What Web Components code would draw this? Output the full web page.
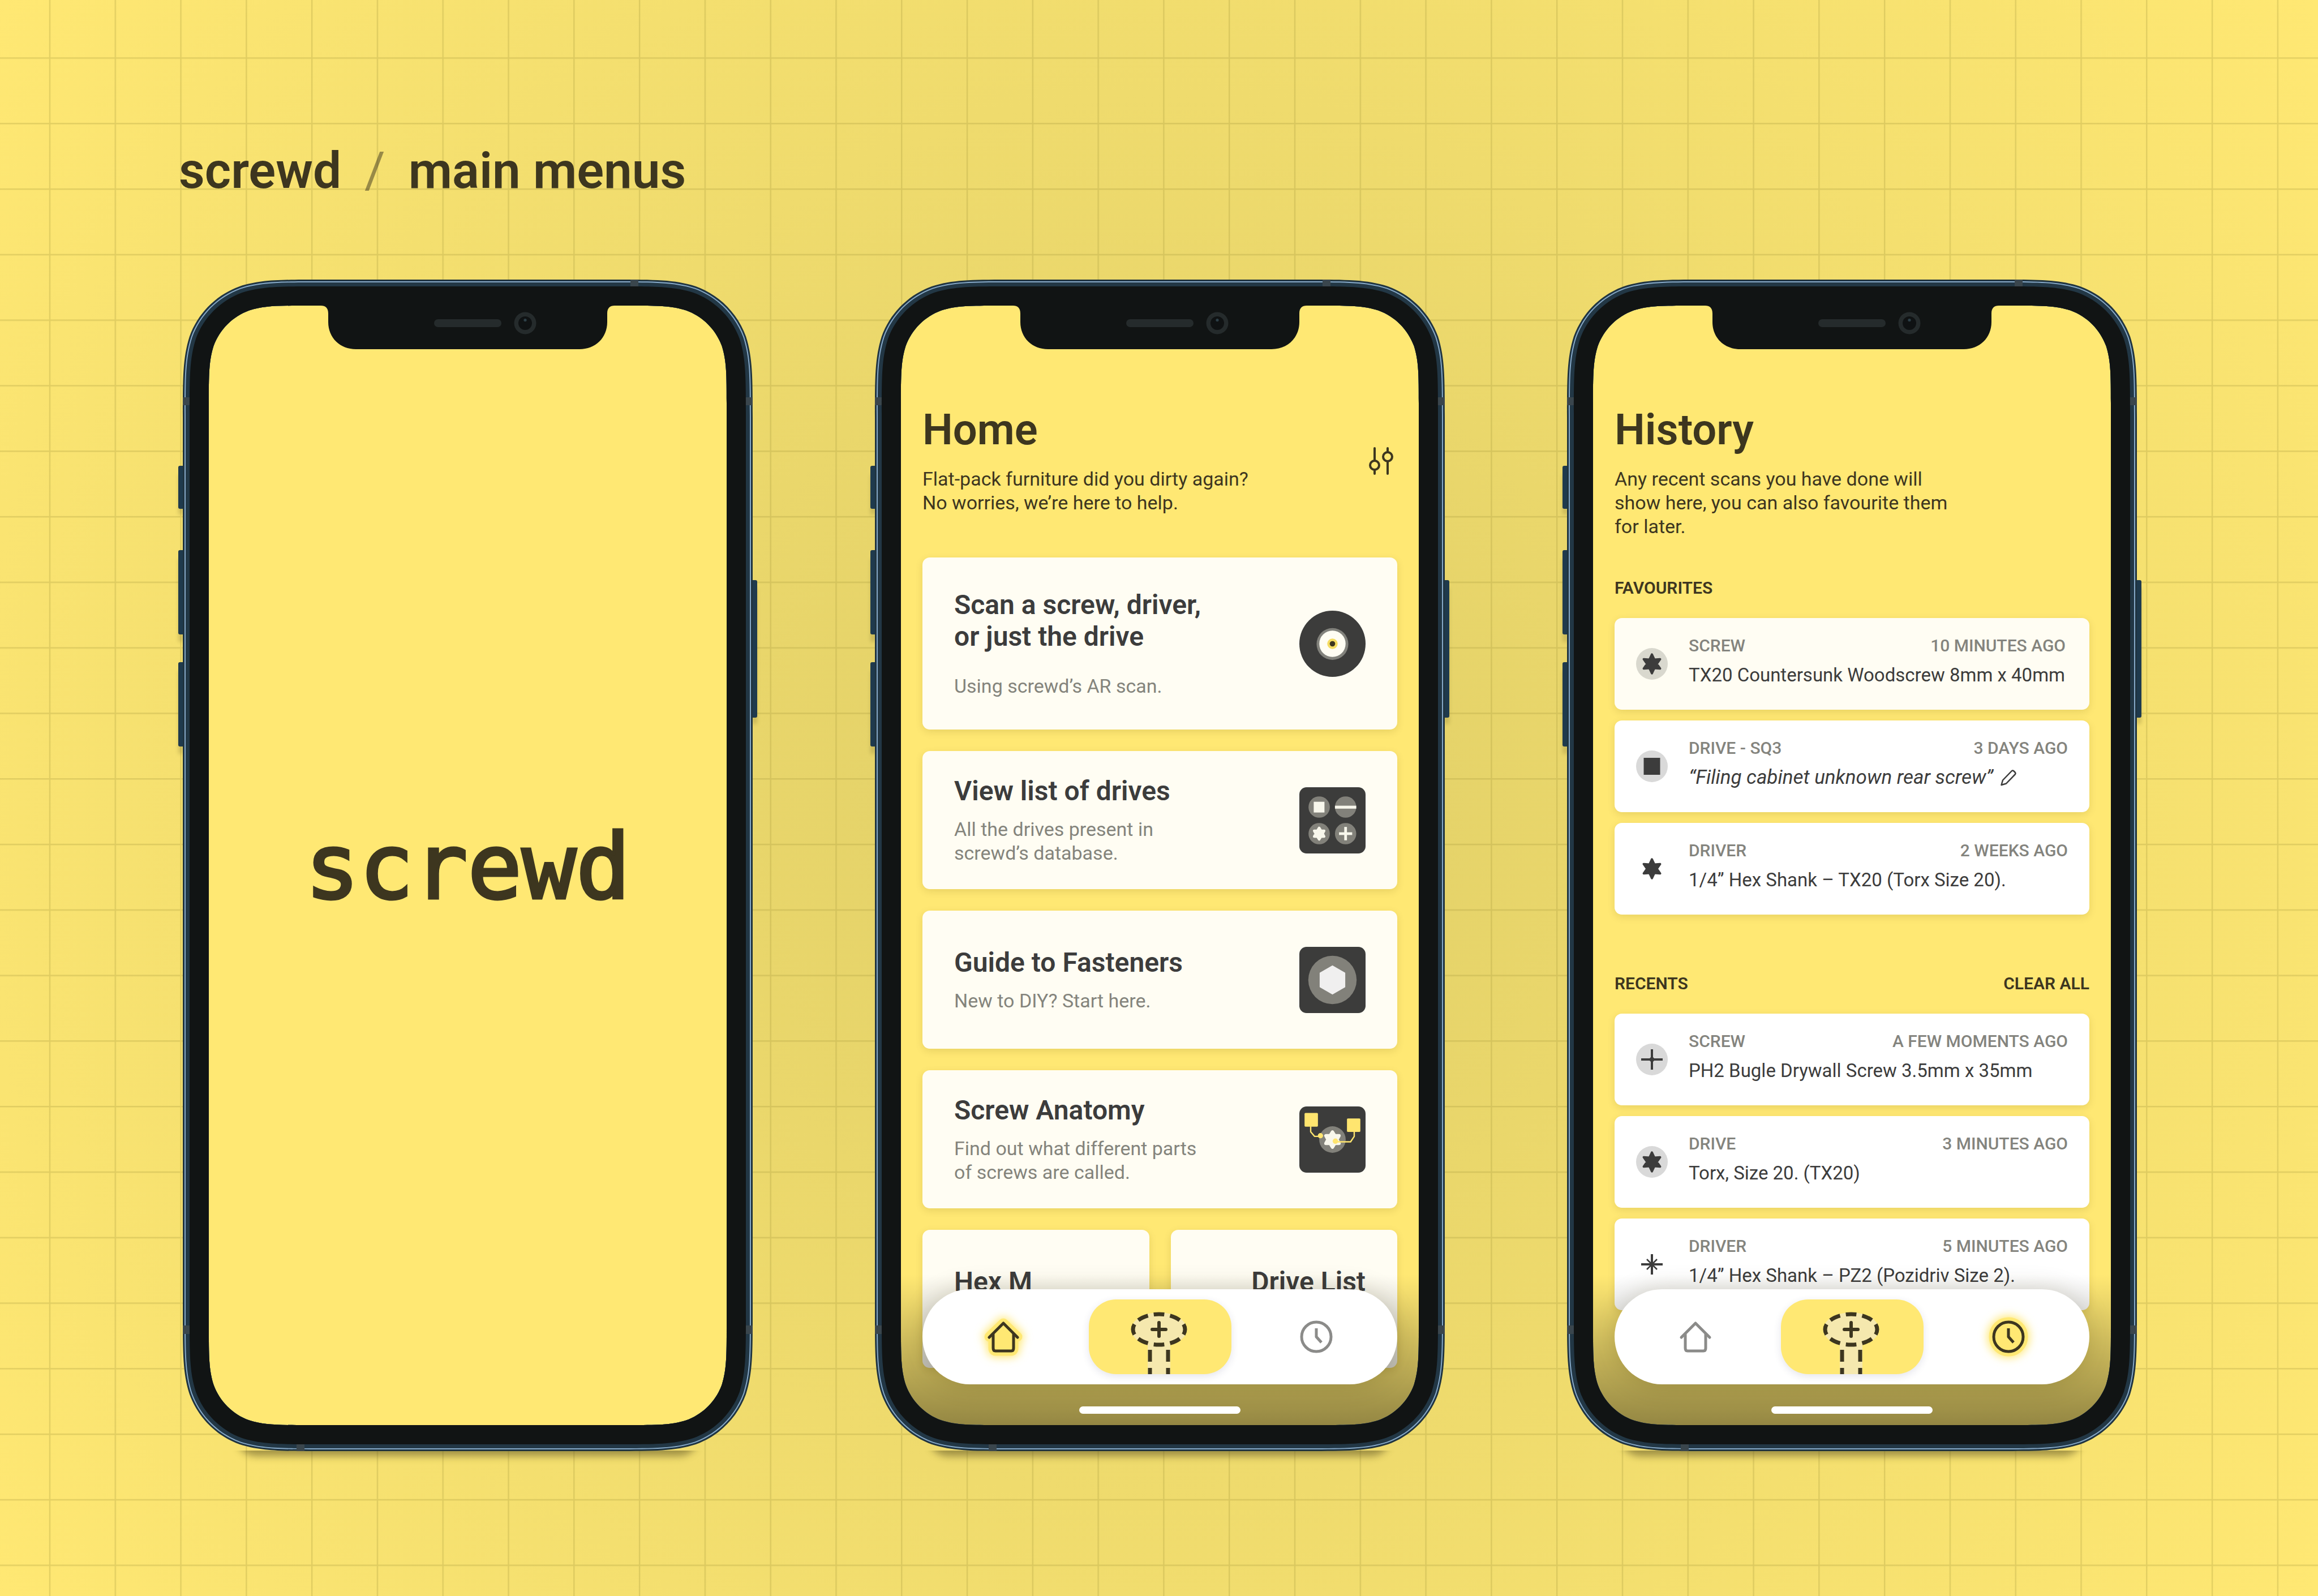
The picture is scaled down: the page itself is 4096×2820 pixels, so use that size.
<!DOCTYPE html>
<html lang="en">
<head>
<meta charset="utf-8">
<title>screwd / main menus</title>
<style>
  html { background: #ffe873; }
  body { margin: 0; font-family: Roboto, "Liberation Sans", sans-serif; }
</style>
</head>
<body>
<grid-stage>
  <board-title slot="title" section="main menus">screwd</board-title>

  <phone-frame>
    <splash-screen>screwd</splash-screen>
  </phone-frame>

  <phone-frame>
    <app-screen>
      <screen-header heading="Home" action="filter">Flat-pack furniture did you dirty again?<br>No worries, we’re here to help.</screen-header>
      <menu-stack>
        <menu-card feature icon="lens">
          <span slot="title">Scan a screw, driver,<br>or just the drive</span>
          Using screwd’s AR scan.
        </menu-card>
        <menu-card icon="drives">
          <span slot="title">View list of drives</span>
          All the drives present in<br>screwd’s database.
        </menu-card>
        <menu-card icon="fastener">
          <span slot="title">Guide to Fasteners</span>
          New to DIY? Start here.
        </menu-card>
        <menu-card icon="anatomy">
          <span slot="title">Screw Anatomy</span>
          Find out what different parts<br>of screws are called.
        </menu-card>
        <mini-card>Hex M</mini-card>
        <mini-card end>Drive List</mini-card>
      </menu-stack>
    </app-screen>
    <tab-bar slot="bar" current="home"></tab-bar>
  </phone-frame>

  <phone-frame>
    <app-screen>
      <screen-header heading="History">Any recent scans you have done will<br>show here, you can also favourite them<br>for later.</screen-header>
      <scan-list label="FAVOURITES">
        <scan-row tinted icon="torx" disc kind="SCREW" when="10 MINUTES AGO">TX20 Countersunk Woodscrew 8mm x 40mm</scan-row>
        <scan-row editable icon="square" disc kind="DRIVE - SQ3" when="3 DAYS AGO">“Filing cabinet unknown rear screw”</scan-row>
        <scan-row icon="torx" kind="DRIVER" when="2 WEEKS AGO">1/4” Hex Shank – TX20 (Torx Size 20).</scan-row>
      </scan-list>
      <scan-list label="RECENTS" action="CLEAR ALL">
        <scan-row icon="phillips" disc kind="SCREW" when="A FEW MOMENTS AGO">PH2 Bugle Drywall Screw 3.5mm x 35mm</scan-row>
        <scan-row icon="torx" disc kind="DRIVE" when="3 MINUTES AGO">Torx, Size 20. (TX20)</scan-row>
        <scan-row icon="pozidriv" kind="DRIVER" when="5 MINUTES AGO">1/4” Hex Shank – PZ2 (Pozidriv Size 2).</scan-row>
      </scan-list>
    </app-screen>
    <tab-bar slot="bar" current="history"></tab-bar>
  </phone-frame>
</grid-stage>

<script>
/* ---------- geometry helpers ---------- */

// Rounded rectangle with continuous-curvature corners.
function smoothRect(x, y, w, h, r) {
  const a = 1.528665 * r, b = 1.088493 * r, c = 0.868407 * r, d = 0.631494 * r,
        e = 0.074911 * r, f = 0.372824 * r, g = 0.16906 * r, X = x + w, Y = y + h;
  return `M${x + a} ${y}H${X - a}C${X - b} ${y} ${X - c} ${y} ${X - d} ${y + e}C${X - f} ${y + g} ${X - g} ${y + f} ${X - e} ${y + d}C${X} ${y + c} ${X} ${y + b} ${X} ${y + a}` +
    `V${Y - a}C${X} ${Y - b} ${X} ${Y - c} ${X - e} ${Y - d}C${X - g} ${Y - f} ${X - f} ${Y - g} ${X - d} ${Y - e}C${X - c} ${Y} ${X - b} ${Y} ${X - a} ${Y}` +
    `H${x + a}C${x + b} ${Y} ${x + c} ${Y} ${x + d} ${Y - e}C${x + f} ${Y - g} ${x + g} ${Y - f} ${x + e} ${Y - d}C${x} ${Y - c} ${x} ${Y - b} ${x} ${Y - a}` +
    `V${y + a}C${x} ${y + b} ${x} ${y + c} ${x + e} ${y + d}C${x + g} ${y + f} ${x + f} ${y + g} ${x + d} ${y + e}C${x + c} ${y} ${x + b} ${y} ${x + a} ${y}Z`;
}

// Six-pointed drive recess; the round stroke softens tips and valleys.
function torx(cx, cy, tip, valley, round, color) {
  let pts = [];
  for (let i = 0; i < 12; i++) {
    const rad = i % 2 ? valley : tip - round, t = Math.PI / 6 * i - Math.PI / 2;
    pts.push((cx + rad * Math.cos(t)).toFixed(2) + ',' + (cy + rad * Math.sin(t)).toFixed(2));
  }
  return `<polygon points="${pts.join(' ')}" fill="${color}" stroke="${color}" stroke-width="${round * 2}" stroke-linejoin="round"/>`;
}

const tile = body => `<svg viewBox="0 0 146 146" aria-hidden="true"><rect width="146" height="146" rx="16" fill="#3c3c3b"/>${body}</svg>`;

const TILES = {
  lens: `<svg viewBox="0 0 146 146" aria-hidden="true"><circle cx="73" cy="73" r="73" fill="#3c3c3b"/><circle cx="73" cy="73.500" r="35" fill="#82827c"/><circle cx="73" cy="73" r="29" fill="#fffdf3"/><circle cx="73" cy="73" r="11.500" fill="#f5dc62"/><circle cx="73" cy="73" r="6" fill="#3d361f"/></svg>`,
  drives: tile(`<g fill="#82817a"><circle cx="43.700" cy="43.700" r="23.500"/><circle cx="102" cy="43.700" r="23.500"/><circle cx="43.700" cy="102.300" r="23.500"/><circle cx="102" cy="102.300" r="23.500"/></g>
    <g fill="#f8f7ec"><rect x="31.700" y="32" width="23.700" height="23.700"/><rect x="78.500" y="40.700" width="47" height="6.500"/><rect x="99" y="87.500" width="6" height="29.500"/><rect x="87.500" y="99.300" width="29" height="6"/></g>${torx(43.7, 102.3, 15.5, 7.6, 2.8, '#f8f7ec')}`),
  fastener: tile(`<circle cx="73" cy="73" r="53.300" fill="#82817a"/><polygon points="73,41 101.200,57 101.200,89 73,105 44.800,89 44.800,57" fill="#f0efef"/>`),
  anatomy: tile(`<circle cx="73" cy="73" r="29.200" fill="#82817a"/>${torx(73, 73, 20.5, 10, 3.6, '#f8f7ec')}
    <g fill="none" stroke="#ffe56f" stroke-width="3"><path d="M25 44V56L33.500 66H46"/><path d="M121 55V66L113 78H79"/></g>
    <g fill="#ffe56f"><rect x="11.500" y="14.500" width="29.500" height="30" rx="2"/><rect x="105" y="26.500" width="29.500" height="29.500" rx="2"/><circle cx="46.500" cy="64.500" r="5.800"/><circle cx="79.500" cy="76.500" r="6"/></g>`)
};

const INK = '#3c3c3c';
const GLYPHS = {
  torx: torx(28, 28, 18.7, 8.6, 2, INK),
  square: `<rect x="13.500" y="13" width="29" height="30" fill="${INK}"/>`,
  phillips: `<path d="M9 28H47M28 10V46" stroke="${INK}" stroke-width="4"/><path d="M28 22L34 28L28 34L22 28Z" fill="${INK}"/>`,
  pozidriv: `<path d="M9 28H47M28 10V46" stroke="${INK}" stroke-width="4"/><path d="M19 19L37 37M37 19L19 37" stroke="${INK}" stroke-width="2.500"/><path d="M28 22L34 28L28 34L22 28Z" fill="${INK}"/>`
};

function define(name, render) {
  customElements.define(name, class extends HTMLElement {
    constructor() { super(); this.attachShadow({ mode: 'open' }); }
    connectedCallback() {
      this.shadowRoot.innerHTML = '<style>:host,*{box-sizing:border-box}h1,h2,h3,p{margin:0;font-weight:inherit;font-size:inherit}</style>' + render(this);
    }
  });
}

/* ---------- page ---------- */

define('grid-stage', () => `
<style>
  :host { display: block; position: relative; min-height: 100vh; padding: 250px 320px 250px 316px;
    background: radial-gradient(circle farthest-corner at center, #dfce67 0%, #ffe873 100%); overflow: hidden; }
  .lines { position: absolute; inset: 0; width: 100%; height: 100%; }
  .content { position: relative; display: flex; flex-direction: column; gap: 140px; }
  .row { display: grid; grid-template-columns: repeat(3, 1fr); column-gap: 216px; padding-left: 7px; align-items: start; }
</style>
<svg class="lines" viewBox="0 0 5094 3507" preserveAspectRatio="xMidYMid slice" aria-hidden="true">
  <defs><pattern id="g" width="144" height="144" patternUnits="userSpaceOnUse" x="108" y="126">
    <path d="M0 1.500H144M1.500 0V144" stroke="#a89a3c" stroke-opacity=".3" stroke-width="3"/></pattern></defs>
  <rect width="5094" height="3507" fill="url(#g)"/>
</svg>
<div class="content"><slot name="title"></slot><div class="row"><slot></slot></div></div>`);

define('board-title', el => `
<style>
  :host { display: block; color: #3d361f; }
  h1 { display: flex; gap: 41px; font-size: 89px; line-height: 104px; font-weight: 600; }
  .slash { font-weight: 400; opacity: .5; }
</style>
<h1><slot></slot><span class="slash">/</span><span>${el.getAttribute('section')}</span></h1>`);

/* ---------- device ---------- */

define('phone-frame', () => {
  const hole = smoothRect(46, 46, 915, 1978, 113);
  const ring = (i, fill) => `<path fill-rule="evenodd" fill="${fill}" d="${smoothRect(i, i, 1007 - 2 * i, 2070 - 2 * i, 159 - i)}${hole}"/>`;
  return `
<style>
  :host { display: block; position: relative; padding: 46px; }
  .frame { position: absolute; inset: 0; width: 100%; height: 100%; overflow: visible; pointer-events: none; }
  .screen { position: relative; aspect-ratio: 915 / 1978; overflow: hidden; border-radius: 96px; background: #ffe873; }
  ::slotted([slot="bar"]) { position: absolute; left: 0; right: 0; bottom: 0; }
</style>
<div class="screen"><slot></slot><slot name="bar"></slot></div>
<svg class="frame" viewBox="0 0 1007 2070" aria-hidden="true">
  <defs>
    <filter id="b" x="-10%" y="-100%" width="120%" height="300%"><feGaussianBlur stdDeviation="7"/></filter>
    <clipPath id="c"><rect x="60" y="2069" width="900" height="60"/></clipPath>
    <filter id="s" x="-200%" y="-10%" width="500%" height="120%"><feGaussianBlur stdDeviation="3"/></filter>
  </defs>
  <g clip-path="url(#c)"><rect x="94" y="2000" width="818" height="79" rx="36" fill="#5d5320" opacity=".55" filter="url(#b)"/></g>
  <g fill="#5d5320" opacity=".22" filter="url(#s)"><rect x="-8" y="345" width="9" height="70"/><rect x="-8" y="494" width="9" height="146"/><rect x="-8" y="692" width="9" height="146"/><rect x="1006" y="545" width="9" height="240"/></g>
  <g fill="#1f3a4d"><rect x="-8" y="329" width="12" height="76" rx="3"/><rect x="-8" y="478" width="12" height="149" rx="3"/><rect x="-8" y="676" width="12" height="149" rx="3"/><rect x="1003" y="531" width="12" height="243" rx="3"/></g>
  ${ring(0, '#203440')}${ring(3, '#86a9c8')}${ring(5, '#223745')}
  <g fill="#3a464d"><rect y="208" width="13" height="14"/><rect x="994" y="208" width="13" height="14"/><rect y="1848" width="13" height="15"/><rect x="994" y="1848" width="13" height="15"/><rect x="791" width="14" height="13"/><rect x="201" y="2057" width="14" height="13"/></g>
  ${ring(12, '#111414')}
  <path fill="#111414" d="M244 44V46C252 46 257 50 257 60V75C257 103 278 123 306 123H701C729 123 750 103 750 75V60C750 50 755 46 763 46V44Z"/>
  <rect x="444" y="70" width="119" height="14" rx="7" fill="#252b2c"/>
  <circle cx="605" cy="77" r="19.500" fill="#252b2c"/><circle cx="605" cy="77" r="12" fill="#0f1213"/><circle cx="605" cy="71.500" r="2.600" fill="#2d3f47"/>
</svg>`;
});

/* ---------- screens ---------- */

define('splash-screen', () => `
<style>
  :host { display: grid; place-items: center; height: 100%; padding-top: 4px; color: #3d361f;
    font-family: "DejaVu Sans Mono", monospace; font-size: 159px; -webkit-text-stroke: 5px #3d361f; }
</style>
<h2><slot></slot></h2>`);

define('app-screen', () => `
<style>:host { display: block; padding: 173px 38px 0; color: #3d361f; }</style>
<slot></slot>`);

define('screen-header', el => `
<style>
  :host { display: flex; align-items: center; justify-content: space-between; }
  h2 { font-size: 76px; line-height: 92px; font-weight: 600; }
  p { margin-top: 20px; font-size: 34px; line-height: 42px; }
  button { padding: 0; border: 0; background: none; color: inherit; }
  svg { display: block; width: 58px; height: 58px; }
</style>
<div><h2>${el.getAttribute('heading')}</h2><p><slot></slot></p></div>
${el.getAttribute('action') === 'filter' ? `<button aria-label="Filters"><svg viewBox="0 0 58 58" fill="none" stroke="currentColor" stroke-width="4" stroke-linecap="round">
  <circle cx="18" cy="40" r="8"/><path d="M18 10V32M18 48V55"/><circle cx="41" cy="25" r="8"/><path d="M41 10V17M41 33V55"/></svg></button>` : ''}`);

define('menu-stack', () => `
<style>:host { display: grid; grid-template-columns: 1fr 1fr; gap: 38px; margin-top: 76px; }</style>
<slot></slot>`);

define('menu-card', el => `
<style>
  :host { display: block; grid-column: 1 / -1; }
  a { display: flex; align-items: center; justify-content: space-between; min-height: 244px; padding: 42px 56px;
    border-radius: 13px; background: #fffdf3; box-shadow: 0 4px 14px rgba(90, 75, 0, .14); color: ${INK}; text-decoration: none; }
  h3 { font-size: 48px; line-height: 56px; font-weight: 600; }
  p { margin-top: 18px; font-size: 34px; line-height: 42px; color: #84847c; }
  :host([feature]) a { padding-block: 56px; }
  :host([feature]) p { margin-top: 38px; }
  svg { display: block; width: 117px; height: 117px; }
</style>
<a href="#${el.getAttribute('icon')}"><div><h3><slot name="title"></slot></h3><p><slot></slot></p></div>${TILES[el.getAttribute('icon')]}</a>`);

define('mini-card', () => `
<style>
  :host { display: block; }
  a { display: block; height: 244px; padding: 64px 56px; border-radius: 13px; background: #fffdf3;
    box-shadow: 0 4px 14px rgba(90, 75, 0, .14); color: ${INK}; text-decoration: none; }
  h3 { font-size: 48px; line-height: 56px; font-weight: 600; }
  :host([end]) { text-align: right; }
</style>
<a href="#tool"><h3><slot></slot></h3></a>`);

define('scan-list', el => `
<style>
  :host { display: block; margin-top: 71px; }
  :host([action]) { margin-top: 105px; }
  header { display: flex; justify-content: space-between; font-size: 30px; line-height: 34px; font-weight: 600; margin-bottom: 36px; }
  button { padding: 0; border: 0; background: none; font: inherit; color: inherit; }
  .rows { display: grid; gap: 19px; }
</style>
<header><h3>${el.getAttribute('label')}</h3>${el.hasAttribute('action') ? `<button>${el.getAttribute('action')}</button>` : ''}</header>
<div class="rows"><slot></slot></div>`);

define('scan-row', el => `
<style>
  :host { display: flex; align-items: center; height: 162px; padding: 0 38px; gap: 37px; border-radius: 13px; background: #fff;
    box-shadow: 0 4px 14px rgba(90, 75, 0, .14); color: ${INK}; }
  :host([tinted]) { background: #fffdf3; padding-right: 42px; --disc: #d9d8ce; }
  .glyph { flex: none; display: block; width: 56px; height: 56px; border-radius: 50%; }
  :host([disc]) .glyph { background: var(--disc, #d9d9d9); }
  .text { flex: 1; padding-bottom: 9px; white-space: nowrap; }
  .meta { display: flex; justify-content: space-between; font-size: 30px; line-height: 34px; font-weight: 500; color: #84847e; }
  .name { display: flex; align-items: center; gap: 12px; margin-top: 14px; font-size: 33px; line-height: 42px; }
  :host([editable]) .name { font-style: italic; font-size: 35px; }
  button { padding: 0; border: 0; background: none; color: inherit; }
  .pen { display: block; width: 30px; height: 30px; }
</style>
<svg class="glyph" viewBox="0 0 56 56" aria-hidden="true">${GLYPHS[el.getAttribute('icon')]}</svg>
<div class="text">
  <div class="meta"><span>${el.getAttribute('kind')}</span><span>${el.getAttribute('when')}</span></div>
  <div class="name"><slot></slot>${el.hasAttribute('editable') ? `<button aria-label="Rename"><svg class="pen" viewBox="0 0 30 30" fill="none" stroke="currentColor" stroke-width="2.500" stroke-linejoin="round"><path d="M2.500 28L5 19.500L20.500 3.500Q22.500 1.500 24.500 3.500L26.500 5.500Q28.500 7.500 26.500 9.500L11 25.500Z"/></svg></button>` : ''}</div>
</div>`);

/* ---------- bottom bar ---------- */

define('tab-bar', el => {
  const on = el.getAttribute('current');
  const icons = {
    home: { line: '<path d="M15 41L40 16L65 41"/><path d="M22 36V60Q22 65 26 65H54Q58 65 58 60V36"/>',
            halo: '<path d="M22 36V60Q22 65 26 65H54Q58 65 58 60V40H65L40 16L15 40H22Z"/>' },
    history: { line: '<circle cx="40" cy="40" r="26"/><path d="M40 25V40L49 50" stroke-linecap="butt"/>',
               halo: '<circle cx="40" cy="40" r="26"/>' }
  };
  const tab = (id, label) => `<button aria-label="${label}"${on === id ? ' aria-current="page"' : ''}><svg class="tab" viewBox="0 0 80 80" aria-hidden="true">
    ${on === id ? `<g fill="#ffe873" stroke="#ffe873" stroke-width="22" stroke-linejoin="round"><g filter="url(#halo)">${icons[id].halo}</g></g>
      <g fill="#ffe873" stroke="#ffe873" stroke-width="17" stroke-linejoin="round">${icons[id].halo}</g>` : ''}
    <g fill="none" stroke="currentColor" stroke-width="5" stroke-linejoin="round" stroke-linecap="round">${icons[id].line}</g></svg></button>`;
  return `
<style>
  :host { display: block; padding: 0 38px 20px; }
  .shade { position: absolute; left: 0; right: 0; bottom: 0; height: 266px; background: linear-gradient(rgba(0, 0, 0, 0), rgba(0, 0, 0, .42)); pointer-events: none; }
  nav { position: relative; display: grid; grid-template-columns: 1fr 252px 1fr; gap: 8px; padding: 18px 0; border-radius: 84px;
    background: #fff; box-shadow: 0 0 44px rgba(60, 50, 0, .2); }
  button { display: grid; place-items: center; padding: 0; border: 0; background: none; color: #8b8b89; }
  button[aria-current] { color: #3d361f; }
  .tab { width: 80px; height: 80px; overflow: visible; }
  .scan { height: 132px; border-radius: 48px; background: #ffe873; box-shadow: 0 4px 14px rgba(40, 40, 90, .12); color: #3d361f; }
  .scan svg { width: 252px; height: 132px; }
  .defs { position: absolute; width: 0; height: 0; }
  .pill { position: relative; width: 285px; height: 13px; margin: 39px auto 0; border-radius: 7px; background: #fff; }
</style>
<div class="shade"></div>
<nav>
  <svg class="defs" aria-hidden="true"><filter id="halo" x="-80%" y="-80%" width="260%" height="260%"><feGaussianBlur stdDeviation="8"/></filter></svg>
  ${tab('home', 'Home')}
  <button class="scan" aria-label="Scan"><svg viewBox="0 0 252 132" fill="none" stroke="currentColor">
    <g fill="#f5e8ae" stroke="none"><ellipse cx="124" cy="53" rx="49" ry="30"/><rect x="104" y="76" width="40" height="56"/></g>
    <ellipse cx="124" cy="53" rx="46" ry="27" stroke-width="7" pathLength="160" stroke-dasharray="13 7" stroke-dashoffset="6.500"/>
    <path d="M108 89V110M140 89V110M108 121V132M140 121V132" stroke-width="7"/>
    <path d="M124 41V65M112 53H136" stroke-width="6" stroke-linecap="round"/></svg></button>
  ${tab('history', 'History')}
</nav>
<div class="pill"></div>`;
});
</script>
</body>
</html>
